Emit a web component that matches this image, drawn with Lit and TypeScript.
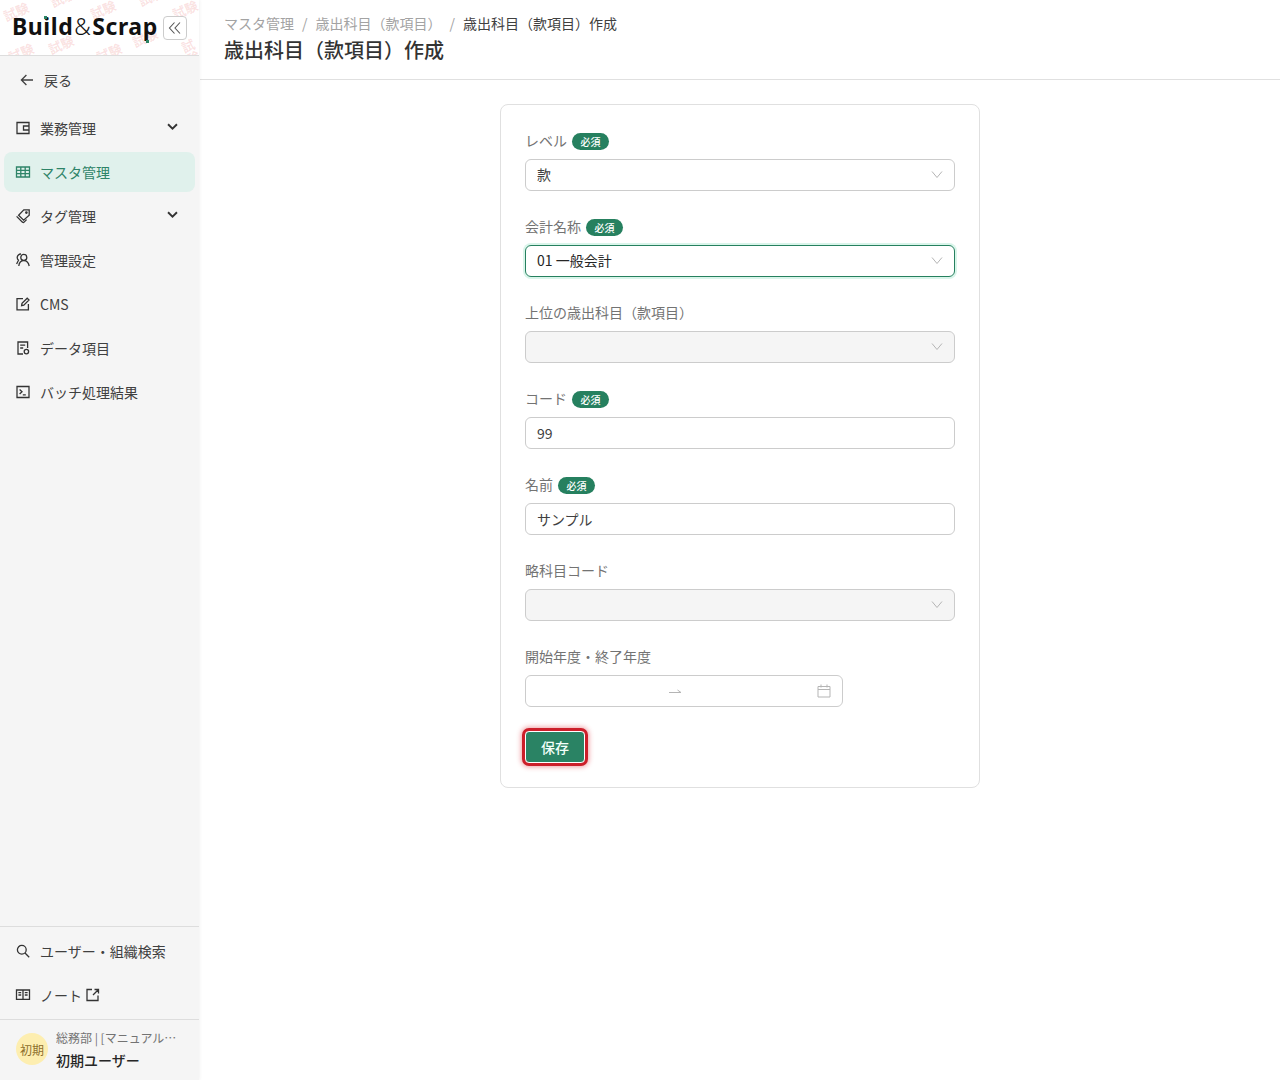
import { LitElement, html, css, svg } from 'lit';
import { customElement } from 'lit/decorators.js';

const stroke = (body: unknown, size = 16) => html`
  <svg class="icon" width=${size} height=${size} viewBox="0 0 16 16" fill="none" stroke="currentColor" stroke-width="1.3">${body}</svg>
`;

const icons = {
  back: svg`<path d="M14 8H2.6M7.4 3 2.4 8l5 5"/>`,
  work: svg`<path d="M2 2.5h12v11H2zM14 6H8.5v4H14"/>`,
  grid: svg`<path d="M1.5 3h13v10h-13zM1.5 6.4h13M1.5 9.7h13M5.8 3v10M10.2 3v10"/>`,
  tag: svg`<path d="M8.8 1.800h5.400v5.400L8.600 12.200 3.600 7.200zM1.600 8.400l5.800 5.800 1.200.4 3-3"/><circle cx="11.400" cy="4.600" r=".7"/>`,
  users: svg`<circle cx="8.800" cy="5.400" r="3"/><path d="M3.800 14c.3-3 2-5.400 5-5.400s4.800 2.400 5.400 5.400M6 2a3.600 3.600 0 0 0-3.800 3.400c0 1.200.5 2 1.300 2.800L1.600 12"/>`,
  edit: svg`<path d="M8 2.6H2v11.200h11.400V8M6.600 9.600l.4-2.200L12.200 2.200l1.800 1.800-5.200 5.200z"/>`,
  data: svg`<path d="M8 14H3V2h9.600v6M5.200 5.200h5M5.200 8h3"/><circle cx="11.400" cy="11.600" r="2.200"/>`,
  terminal: svg`<path d="M2 2.500h12v11H2zM4.600 5.600 7 7.800 4.600 10M7.800 10.800h3"/>`,
  search: svg`<circle cx="6.800" cy="6.800" r="4.400"/><path d="m10 10 4.200 4.200"/>`,
  book: svg`<path d="M1.500 3h13v9.400h-13zM8 3v9.400M3.400 5.600h2.800M3.400 8h2.800M9.800 5.600h2.800M9.800 8h2.800"/>`,
  external: svg`<path d="M7 2.500H2v11h11V8.500M9.500 2.500h4v4M13.500 2.500 8 8"/>`,
  chevron: svg`<path d="m2.500 5.200 5.500 5.500 5.500-5.500" stroke-width="2.300"/>`,
};

// watermark lattice seen behind the logo
const watermarks = [
  [3, 5], [50, -9], [90, 3], [132, 31], [172, 3], [8, 46], [48, 38], [96, 46], [138, -10], [184, 38],
];

@customElement('side-nav')
export class SideNav extends LitElement {
  static styles = css`
    :host {
      display: flex;
      flex-direction: column;
      width: 199px;
      margin-right: 1px;
      height: 1080px;
      flex: none;
      background: #f5f5f5;
      box-shadow: 1px 0 3px rgba(0, 0, 0, 0.05);
      color: #404040;
      font-size: 14px;
      position: relative;
    }
    .brand {
      height: 56px;
      box-sizing: border-box;
      flex: none;
      background: #fff;
      border-bottom: 1px solid #ddd;
      display: flex;
      align-items: center;
      justify-content: space-between;
      padding: 0 12px 0 12px;
      position: relative;
      overflow: hidden;
    }
    .mark {
      position: absolute;
      font-size: 13px;
      font-weight: 700;
      color: rgba(224, 70, 70, 0.16);
      transform: rotate(-24deg);
      line-height: 1;
    }
    .logo {
      position: relative;
      font-family: 'Noto Sans', sans-serif;
      font-size: 23px;
      font-weight: 700;
      color: #111;
      letter-spacing: 0.55px;
      line-height: 1;
      margin-top: -2px;
      white-space: nowrap;
    }
    .logo span {
      font-weight: 300;
      margin: 0 1px;
    }
    .dot {
      position: absolute;
      width: 3px;
      height: 3px;
      background: #2a8364;
    }
    .dot.i {
      left: 32px;
      top: 1px;
    }
    .dot.p {
      left: 134px;
      top: 25px;
    }
    .collapse {
      position: relative;
      width: 24px;
      height: 24px;
      box-sizing: border-box;
      border: 1px solid #ccc;
      border-radius: 4px;
      background: #fff;
      display: flex;
      align-items: center;
      justify-content: center;
      color: #555;
    }
    .back {
      height: 48px;
      display: flex;
      align-items: center;
      gap: 9px;
      padding: 0 19px;
      flex: none;
    }
    .menu {
      display: flex;
      flex-direction: column;
      gap: 4px;
      padding: 4px 4px 0 4px;
    }
    .item {
      height: 40px;
      display: flex;
      align-items: center;
      gap: 9px;
      padding: 0 16px 0 11px;
      border-radius: 8px;
    }
    .item .icon {
      color: #333;
    }
    .item .label {
      flex: 1;
      display: flex;
      align-items: center;
      gap: 3px;
      white-space: nowrap;
    }
    .item.active {
      background: #e0f1ec;
      color: #2e8468;
    }
    .item.active .icon {
      color: #2e8468;
    }
    .chevron {
      color: #333;
      margin-top: -2px;
    }
    .foot {
      margin-top: auto;
      border-top: 1px solid #ddd;
      padding: 4px 4px 4px 4px;
      display: flex;
      flex-direction: column;
      gap: 4px;
    }
    .user {
      height: 61px;
      box-sizing: border-box;
      border-top: 1px solid #ddd;
      display: flex;
      align-items: center;
      gap: 8px;
      padding: 0 16px 2px;
    }
    .avatar {
      width: 32px;
      height: 32px;
      flex: none;
      border-radius: 50%;
      background: #fdeeb0;
      color: #8d6e2c;
      font-size: 12px;
      display: flex;
      align-items: center;
      justify-content: center;
    }
    .who {
      min-width: 0;
      flex: 1;
      display: flex;
      flex-direction: column;
      gap: 3px;
    }
    .org {
      font-size: 12px;
      line-height: 18px;
      color: #737373;
      white-space: nowrap;
      overflow: hidden;
      text-overflow: ellipsis;
    }
    .name {
      font-size: 14px;
      line-height: 20px;
      font-weight: 500;
      color: #262626;
    }
  `;

  private row(icon: unknown, label: string, opts: { chevron?: boolean; active?: boolean; external?: boolean } = {}) {
    return html`
      <div class="item ${opts.active ? 'active' : ''}">
        ${stroke(icon)}
        <div class="label">${label}${opts.external ? stroke(icons.external) : ''}</div>
        ${opts.chevron ? html`<span class="chevron">${stroke(icons.chevron, 13)}</span>` : ''}
      </div>
    `;
  }

  render() {
    return html`
      <div class="brand">
        ${watermarks.map(([x, y]) => html`<div class="mark" style="left:${x}px;top:${y}px">試験</div>`)}
        <div class="logo">Build<span>&amp;</span>Scrap<i class="dot i"></i><i class="dot p"></i></div>
        <div class="collapse">
          <svg width="14" height="14" viewBox="0 0 14 14" fill="none" stroke="currentColor" stroke-width="1.100">
            <path d="M6.500 1.500 1.500 7l5 5.500M12 1.500 7 7l5 5.500" />
          </svg>
        </div>
      </div>
      <div class="back">${stroke(icons.back)}<span>戻る</span></div>
      <div class="menu">
        ${this.row(icons.work, '業務管理', { chevron: true })}
        ${this.row(icons.grid, 'マスタ管理', { active: true })}
        ${this.row(icons.tag, 'タグ管理', { chevron: true })}
        ${this.row(icons.users, '管理設定')}
        ${this.row(icons.edit, 'CMS')}
        ${this.row(icons.data, 'データ項目')}
        ${this.row(icons.terminal, 'バッチ処理結果')}
      </div>
      <div class="foot">
        ${this.row(icons.search, 'ユーザー・組織検索')}
        ${this.row(icons.book, 'ノート', { external: true })}
      </div>
      <div class="user">
        <div class="avatar">初期</div>
        <div class="who">
          <div class="org">総務部 | [マニュアル用] 総務課</div>
          <div class="name">初期ユーザー</div>
        </div>
      </div>
    `;
  }
}

type Field = {
  label: string;
  required?: boolean;
  value?: string;
  kind: 'select' | 'input';
  disabled?: boolean;
  focused?: boolean;
};

const fields: Field[] = [
  { label: 'レベル', required: true, value: '款', kind: 'select' },
  { label: '会計名称', required: true, value: '01 一般会計', kind: 'select', focused: true },
  { label: '上位の歳出科目（款項目）', kind: 'select', disabled: true },
  { label: 'コード', required: true, value: '99', kind: 'input' },
  { label: '名前', required: true, value: 'サンプル', kind: 'input' },
  { label: '略科目コード', kind: 'select', disabled: true },
];

@customElement('app-root')
export class AppRoot extends LitElement {
  static styles = css`
    :host {
      display: flex;
      width: 1280px;
      height: 1080px;
      overflow: hidden;
      background: #fff;
      font-family: 'Noto Sans CJK JP', 'Noto Sans', sans-serif;
    }
    main {
      flex: 1;
      min-width: 0;
    }
    header {
      height: 80px;
      box-sizing: border-box;
      border-bottom: 1px solid #e0e0e0;
      padding: 13px 24px 0;
    }
    .crumbs {
      display: flex;
      font-size: 14px;
      line-height: 20px;
      color: #a3a3a3;
    }
    .crumbs .sep {
      margin: 0 8px;
    }
    .crumbs .now {
      color: #404040;
    }
    h1 {
      margin: 2px 0 0;
      font-size: 20px;
      line-height: 30px;
      font-weight: 500;
      color: #333;
    }
    .body {
      display: flex;
      justify-content: center;
      padding-top: 24px;
    }
    form {
      width: 480px;
      box-sizing: border-box;
      border: 1px solid #e0e0e0;
      border-radius: 8px;
      padding: 24px;
      display: flex;
      flex-direction: column;
      gap: 24px;
    }
    .label {
      height: 22px;
      margin-bottom: 8px;
      display: flex;
      align-items: center;
      gap: 5px;
      font-size: 14px;
      color: #737373;
      white-space: nowrap;
    }
    .badge {
      width: 37px;
      height: 17px;
      border-radius: 9px;
      background: #26805f;
      color: #fff;
      font-size: 10px;
      font-weight: 500;
      line-height: 17px;
      text-align: center;
      margin-top: 3px;
    }
    .control {
      height: 32px;
      box-sizing: border-box;
      border: 1px solid #ccc;
      border-radius: 6px;
      padding: 0 11px;
      display: flex;
      align-items: center;
      justify-content: space-between;
      font-size: 14px;
      color: #404040;
      background: #fff;
    }
    .control.select {
      padding-bottom: 2px;
    }
    .control.disabled {
      background: #f5f5f5;
    }
    .control.focused {
      border-color: #26805f;
      box-shadow: 0 0 0 2px #d9f5ea;
      color: #262626;
    }
    .caret {
      color: #b5b5b5;
      display: flex;
    }
    .range {
      width: 318px;
      padding-bottom: 1px;
    }
    .range .arrow {
      color: #b5b5b5;
      margin-left: 131px;
      display: flex;
    }
    button {
      align-self: flex-start;
      width: 60px;
      height: 32px;
      border: 1px solid #fff;
      border-radius: 4px;
      background: #2a8364;
      color: #f2fffa;
      font: 500 14px 'Noto Sans CJK JP', sans-serif;
      padding: 0;
      outline: 3px solid #cc1f2a;
      box-shadow: 0 0 5px 4px rgba(221, 40, 50, 0.45);
    }
  `;

  private renderField(f: Field) {
    return html`
      <div>
        <div class="label">${f.label}${f.required ? html`<span class="badge">必須</span>` : ''}</div>
        <div class="control ${f.kind} ${f.disabled ? 'disabled' : ''} ${f.focused ? 'focused' : ''}">
          <span>${f.value ?? ''}</span>
          ${f.kind === 'select'
            ? html`<span class="caret">
                <svg width="12" height="12" viewBox="0 0 12 12" fill="none" stroke="currentColor"><path d="m1 3.500 5 6 5-6" /></svg>
              </span>`
            : ''}
        </div>
      </div>
    `;
  }

  render() {
    return html`
      <side-nav></side-nav>
      <main>
        <header>
          <div class="crumbs">
            <span>マスタ管理</span><span class="sep">/</span><span>歳出科目（款項目）</span><span class="sep">/</span>
            <span class="now">歳出科目（款項目）作成</span>
          </div>
          <h1>歳出科目（款項目）作成</h1>
        </header>
        <div class="body">
          <form>
            ${fields.map((f) => this.renderField(f))}
            <div>
              <div class="label">開始年度・終了年度</div>
              <div class="control range">
                <span class="arrow">
                  <svg width="14" height="8" viewBox="0 0 14 8" fill="none" stroke="currentColor"><path d="M1 5.500h12L9.500 3" /></svg>
                </span>
                <span class="caret">
                  <svg width="14" height="14" viewBox="0 0 14 14" fill="none" stroke="currentColor"><path d="M1 2.500h12v10.500H1zM1 5.500h12M4 .5v3M10 .5v3" /></svg>
                </span>
              </div>
            </div>
            <button type="button">保存</button>
          </form>
        </div>
      </main>
    `;
  }
}
